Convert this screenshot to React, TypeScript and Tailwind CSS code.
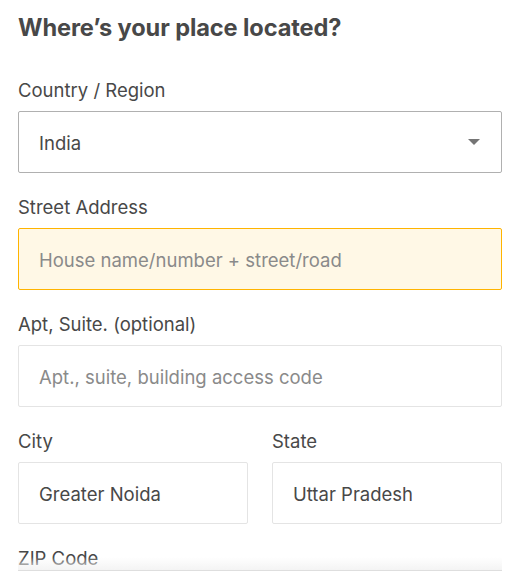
import React from "react";

const font = { fontFamily: "Inter, 'Noto Sans', sans-serif" };

function Label({ children }: { children: React.ReactNode }) {
  return (
    <div className="text-[18.5px] leading-6 h-6 text-[#484848]">{children}</div>
  );
}

function Box({
  children,
  className = "",
}: {
  children: React.ReactNode;
  className?: string;
}) {
  return (
    <div
      className={`mt-[9px] h-[62px] rounded-[2px] border flex items-center px-[20px] pt-[3px] text-[18.5px] ${className}`}
    >
      {children}
    </div>
  );
}

export default function App() {
  return (
    <div
      className="w-[526px] h-[571px] overflow-hidden bg-white relative"
      style={font}
    >
      <div className="pl-[18px] pr-[24px] pt-[14px]">
        <h1 className="text-[23.6px] leading-7 font-bold text-[#484848] tracking-[-0.1px]">
          Where’s your place located?
        </h1>

        <div className="mt-[36px]">
          <Label>Country / Region</Label>
          <Box className="border-[#b0b0b0] text-[#484848] justify-between">
            <span>India</span>
            <svg width="12" height="6" viewBox="0 0 12 6" className="mr-[1px] -mt-[3px]">
              <path d="M0 0 L12 0 L6 6 Z" fill="#757575" />
            </svg>
          </Box>
        </div>

        <div className="mt-[22px]">
          <Label>Street Address</Label>
          <Box className="border-[#ffb400] bg-[#fff8e6] text-[#8a8a8a]">
            House name/number + street/road
          </Box>
        </div>

        <div className="mt-[22px]">
          <Label>Apt, Suite. (optional)</Label>
          <Box className="border-[#e4e4e4] text-[#8a8a8a]">
            Apt., suite, building access code
          </Box>
        </div>

        <div className="mt-[22px] grid grid-cols-2 gap-x-[24px]">
          <div>
            <Label>City</Label>
            <Box className="border-[#e4e4e4] text-[#484848]">Greater Noida</Box>
          </div>
          <div>
            <Label>State</Label>
            <Box className="border-[#e4e4e4] text-[#484848]">Uttar Pradesh</Box>
          </div>
        </div>

        <div className="mt-[22px]">
          <Label>ZIP Code</Label>
        </div>
      </div>
      <div className="absolute left-[18px] right-[24px] bottom-0 h-[14px] bg-gradient-to-b from-transparent to-[#f3f3f3]" />
      <div className="absolute left-[18px] right-[24px] bottom-0 h-[1px] bg-[#dedede]" />
    </div>
  );
}
